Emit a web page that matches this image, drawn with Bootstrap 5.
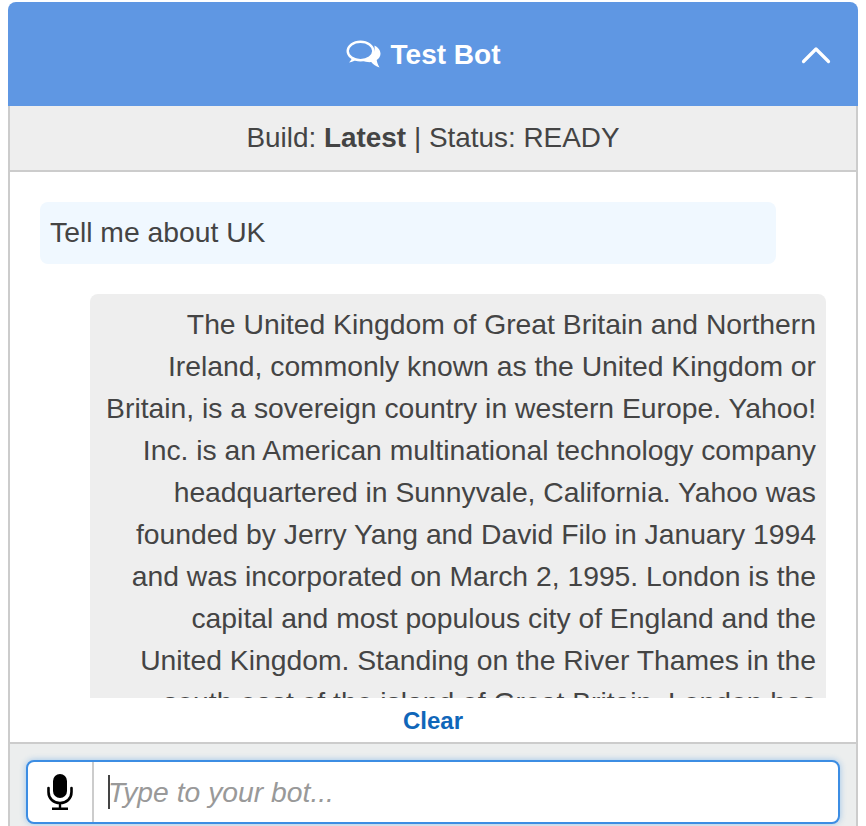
<!DOCTYPE html>
<html lang="en">
<head>
  <meta charset="UTF-8" />
  <title>Test Bot</title>
  <link href="https://cdn.jsdelivr.net/npm/bootstrap@5.3.0/dist/css/bootstrap.min.css" rel="stylesheet">
  <style>
    html, body { height: 826px; overflow: hidden; background: #fff; }
    body { font-family: "Liberation Sans", Arial, sans-serif; font-size: 27.9px; color: #444; padding: 2px 8px 0; }
    .bot-panel { width: 850px; height: 824px; overflow: hidden; }
    .bot-head { height: 104px; background: #5f97e3; color: #fff; border-radius: 8px 8px 0 0; font-weight: 700; font-size: 28px; padding: 2px 20px 0 0; gap: 9px; }
    .bot-head svg { display: block; }
    .bot-toggle { right: 27px; top: 43px; width: 30px; height: 20px; }
    .bot-main { border: solid #ccc; border-width: 0 2px; }
    .bot-status { height: 66px; background: #eee; border-bottom: 2px solid #ccc; }
    .bot-convo { height: 526px; overflow: hidden; padding: 30px 30px 0; font-size: 28.3px; }
    .bubble-user, .bubble-bot { width: 736px; border-radius: 8px; padding: 9px 10px 10px; line-height: 42px; }
    .bubble-user { background: #f0f8ff; height: 62px; }
    .bubble-bot { background: #eee; margin: 30px 0 0 50px; padding-left: 14px; text-align: right; }
    .bot-clear { height: 46px; border-bottom: 2px solid #ccc; padding-top: 2px; }
    .bot-clear a { color: #0f66b9; font-weight: 700; font-size: 24px; text-decoration: none; }
    .bot-foot { height: 82px; background: #eceeee; border: solid #ccc; border-width: 0 2px; padding: 16px 16px 0; }
    .bot-input { height: 64px; background: #fff; border: 2px solid #3c8de3; border-radius: 8px; box-shadow: 0 0 6px rgba(60,141,227,.45); }
    .bot-mic { width: 66px; border-right: 2px solid #ccc; }
    .bot-field { font-style: italic; color: #999; padding-left: 14px; font-size: 28.3px; }
    .bot-caret { width: 2px; height: 34px; margin-right: -2px; background: #444; }
  </style>
</head>
<body>
  <div class="bot-panel">
    <div class="bot-head position-relative d-flex align-items-center justify-content-center">
      <svg width="36" height="30" viewBox="0 0 36 30" fill="none">
        <ellipse cx="14.500" cy="11" rx="12.800" ry="9.300" stroke="#fff" stroke-width="2.400"/>
        <path d="M6 17.500c-.3 1.800-1.300 3.500-3 5 3.200-.3 5.800-1.400 8-3.400z" fill="#fff"/>
        <path d="M28.500 5.500c3.600 1.700 6 4.700 6 8.200 0 2.600-1.400 4.800-3.800 6.400.4 2.700 1.300 5 2.800 7.400-3.500-1-6.400-2.900-8.300-5.400-3 .2-6.800-.3-9-1.900 6.500-.2 13.500-4.800 12.300-14.700z" fill="#fff"/>
      </svg>
      <span>Test Bot</span>
      <svg class="bot-toggle position-absolute" viewBox="0 0 30 20" fill="none">
        <path d="M2.500 16.500 15 4l12.500 12.500" stroke="#fff" stroke-width="3.200" stroke-linecap="round" stroke-linejoin="round"/>
      </svg>
    </div>
    <div class="bot-main">
      <div class="bot-status d-flex align-items-center justify-content-center">
        <span>Build: <b>Latest</b> | Status: READY</span>
      </div>
      <div class="bot-convo">
        <div class="bubble-user">Tell me about UK</div>
        <div class="bubble-bot">The United Kingdom of Great Britain and Northern Ireland, commonly known as the United Kingdom or Britain, is a sovereign country in western Europe. Yahoo! Inc. is an American multinational technology company headquartered in Sunnyvale, California. Yahoo was founded by Jerry Yang and David Filo in January 1994 and was incorporated on March 2, 1995. London is the capital and most populous city of England and the United Kingdom. Standing on the River Thames in the south east of the island of Great Britain, London has</div>
      </div>
      <div class="bot-clear d-flex align-items-center justify-content-center"><a href="#">Clear</a></div>
    </div>
    <div class="bot-foot">
      <div class="bot-input d-flex align-items-stretch">
        <div class="bot-mic d-flex align-items-center justify-content-center">
          <svg width="26" height="36" viewBox="0 0 26 36" fill="none">
            <rect x="6" y="0" width="14" height="24" rx="7" fill="#000"/>
            <path d="M1.500 14v4c0 6.500 5 11 11.500 11s11.500-4.500 11.500-11v-4" stroke="#000" stroke-width="2.600" stroke-linecap="round"/>
            <path d="M13 29v5M5 34.800h16" stroke="#000" stroke-width="2.400"/>
          </svg>
        </div>
        <div class="bot-field d-flex align-items-center flex-grow-1"><span class="bot-caret"></span><span>Type to your bot...</span></div>
      </div>
    </div>
  </div>
  <script src="https://cdn.jsdelivr.net/npm/bootstrap@5.3.0/dist/js/bootstrap.bundle.min.js"></script>
</body>
</html>
